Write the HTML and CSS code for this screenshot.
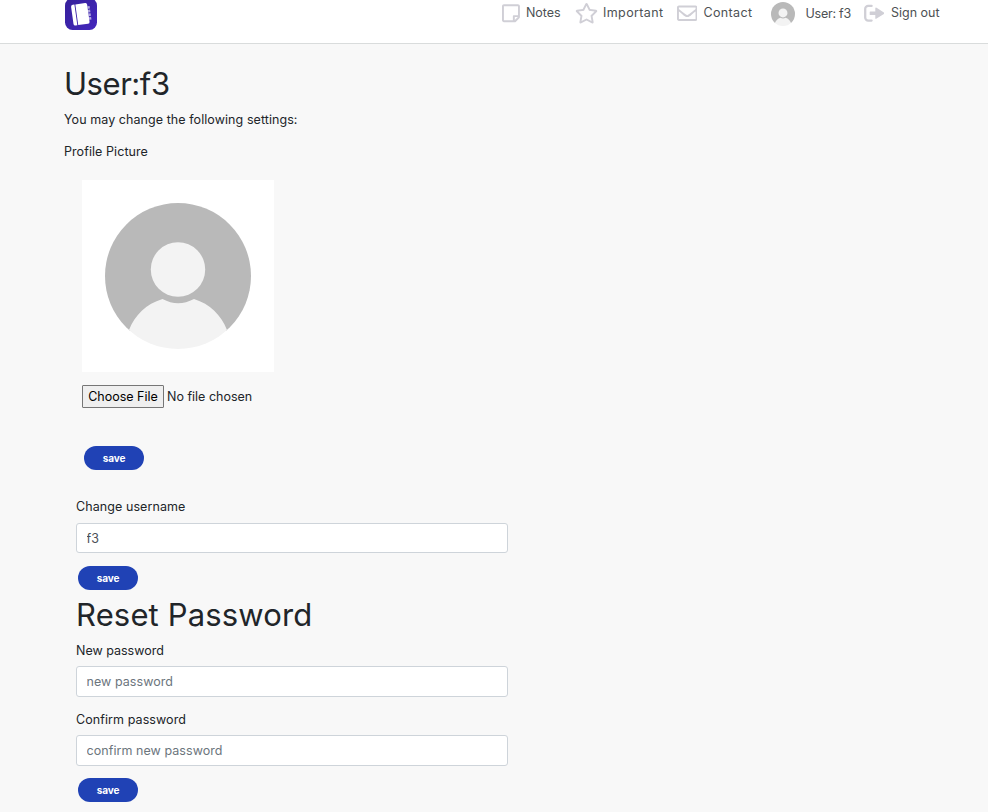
FILE: index.html
```html
<!DOCTYPE html>
<html lang="en">
<head>
<meta charset="utf-8">
<title>User settings</title>
<link rel="stylesheet" href="styles.css">
</head>
<body>
<svg width="0" height="0" class="defs" aria-hidden="true">
  <symbol id="avatar" viewBox="0 0 146 146">
    <clipPath id="disc"><circle cx="73" cy="73" r="73"/></clipPath>
    <g clip-path="url(#disc)">
      <rect width="146" height="128" fill="#b9b9b9"/>
      <path d="M24 127C30 112 41 101 57.500 96Q73 104.500 89 96C105 101 116 112 122 127L146 146H0Z" fill="#f3f3f3"/>
      <circle cx="73" cy="66.500" r="27.200" fill="#f3f3f3"/>
    </g>
  </symbol>
</svg>
<header class="topbar">
  <a class="brand"><svg width="32" height="32" viewBox="0 0 32 32">
    <defs><linearGradient id="lg" x1="0" y1="0" x2="1" y2="1"><stop offset="0" stop-color="#35209a"/><stop offset="1" stop-color="#4427bd"/></linearGradient></defs>
    <rect width="32" height="32" rx="7.500" fill="url(#lg)"/>
    <g transform="rotate(-8 16 16)" fill="#fff">
      <path d="M9 5.800h1.800v20.800H9a1.800 1.800 0 0 1-1.800-1.800V7.600A1.800 1.800 0 0 1 9 5.800z"/>
      <path d="M11.700 5.800h9.900a1.800 1.800 0 0 1 1.800 1.800v17.200a1.800 1.800 0 0 1-1.800 1.800h-9.900z"/>
      <path d="M23.400 9.200h2.200v2.600h-2.200zM23.400 12.900h2.200v2.600h-2.200zM23.400 16.600h2.200v2.600h-2.200zM23.400 20.300h2.200v2.600h-2.200z" opacity=".6"/>
    </g>
  </svg></a>
  <nav class="nav">
    <a class="item notes"><svg width="17.92" height="20.48" viewBox="0 0 448 512"><path d="M448 348.106V80c0-26.51-21.49-48-48-48H48C21.49 32 0 53.49 0 80v351.988c0 26.51 21.49 48 48 48h268.118a48 48 0 0 0 33.941-14.059l83.882-83.882A48 48 0 0 0 448 348.106zm-128 80.005v-76.118h76.118L320 428.111zM400 80v223.988H296c-13.255 0-24 10.745-24 24v104H48V80h352z"/></svg><span>Notes</span></a>
    <a class="item important"><svg width="23.04" height="20.48" viewBox="0 0 576 512"><path d="M528.1 171.5L382 150.2 316.7 17.8c-11.7-23.6-45.6-23.9-57.4 0L194 150.2 47.900 171.5c-26.2 3.8-36.7 36.1-17.7 54.6l105.7 103-25 145.500c-4.500 26.300 23.200 46 46.400 33.700L288 439.600l130.700 68.700c23.200 12.200 50.900-7.400 46.400-33.700l-25-145.500 105.700-103c19-18.500 8.500-50.800-17.700-54.600zM388.600 312.300l23.700 138.400L288 385.400l-124.300 65.300 23.700-138.400-100.600-98 139-20.200 62.200-126 62.200 126 139 20.200-100.600 98z"/></svg><span>Important</span></a>
    <a class="item contact"><svg width="20.48" height="20.48" viewBox="0 0 512 512"><path d="M464 64H48C21.490 64 0 85.490 0 112v288c0 26.510 21.490 48 48 48h416c26.510 0 48-21.490 48-48V112c0-26.510-21.490-48-48-48zm0 48v40.805c-22.422 18.259-58.168 46.651-134.587 106.490-16.841 13.247-50.201 45.072-73.413 44.701-23.208.375-56.579-31.459-73.413-44.701C106.180 199.465 70.425 171.067 48 152.805V112h416zM48 400V214.398c22.914 18.251 55.409 43.862 104.938 82.646 21.857 17.205 60.134 55.186 103.062 54.955 42.717.231 80.509-37.199 103.053-54.947 49.528-38.783 82.032-64.401 104.947-82.653V400H48z"/></svg><span>Contact</span></a>
    <a class="item user"><svg width="24" height="24"><use href="#avatar"/></svg><span>User: f3</span></a>
    <a class="item signout"><svg width="20.48" height="20.48" viewBox="0 0 20.48 20.48"><path class="door" d="M7.600 2.900H4.200a3 3 0 0 0-3 3v8.700a3 3 0 0 0 3 3h3.400"/><path d="M6.300 8.400h5V5.200q.3-1.200 1.300-.4l7.300 4.700q.7.700 0 1.400l-7.300 4.700q-1 .8-1.300-.4V12.100h-5q-.6 0-.6-.6V9q0-.6.6-.6z"/></svg><span>Sign out</span></a>
  </nav>
</header>
<main class="page">
  <h1 class="title">User:f3</h1>
  <p class="text intro">You may change the following settings:</p>
  <p class="text pic-label">Profile Picture</p>
  <section class="picture">
    <div class="photo"><svg width="146" height="146"><use href="#avatar"/></svg></div>
    <div class="file"><button class="choose" type="button">Choose File</button><span class="none">No file chosen</span></div>
    <button class="save" type="button">save</button>
  </section>
  <form class="form">
    <label class="text l-user" for="u">Change username</label>
    <input class="field" id="u" type="text" value="f3">
    <button class="save" type="button">save</button>
    <h1 class="title reset">Reset Password</h1>
    <label class="text l-new" for="n">New password</label>
    <input class="field" id="n" type="password" placeholder="new password">
    <label class="text l-confirm" for="c">Confirm password</label>
    <input class="field" id="c" type="password" placeholder="confirm new password">
    <button class="save" type="button">save</button>
  </form>
</main>
</body>
</html>
```
FILE: styles.css
```css
* { box-sizing: border-box; }
html { overflow: hidden; }
body {
  margin: 0;
  background: #f8f8f8;
  color: #212529;
  font: 12.5px/20px Inter, "Open Sans", sans-serif;
}
.defs { position: absolute; }
.topbar {
  display: flex;
  justify-content: space-between;
  height: 44px;
  padding: 0 48px 0 65px;
  background: #fff;
  border-bottom: 1px solid #d9dcdc;
}
.brand { display: block; height: 32px; margin-top: -2px; }
.nav { display: flex; height: 27px; align-items: center; color: #4d5154; }
.item { display: flex; align-items: center; flex: none; white-space: nowrap; }
.item svg { flex: none; fill: #d0cfd6; }
.item .door { fill: none; stroke: #d0cfd6; stroke-width: 2.3; stroke-linecap: round; }
.item span { margin-top: -1px; }
.notes { width: 72.5px; gap: 6px; }
.important { width: 102.5px; gap: 5.5px; letter-spacing: .38px; }
.contact { width: 94px; gap: 6px; letter-spacing: .36px; }
.user { width: 93px; gap: 10.5px; letter-spacing: -.25px; }
.user span { margin-top: 0; }
.signout { width: 76px; gap: 6.5px; }
.user svg { margin-top: 1px; }

.page { padding-left: 64px; }
.title { margin: 0; font-size: 31px; font-weight: 400; line-height: 38px; }
.page > .title { padding-top: 21px; letter-spacing: -.45px; }
.text { display: block; margin: 0; height: 20px; }
.intro { margin-top: 7px; letter-spacing: .07px; }
.pic-label { margin-top: 12px; letter-spacing: .07px; }
.picture { padding: 18px 0 0 18px; }
.photo {
  display: flex;
  align-items: center;
  justify-content: center;
  width: 192px;
  height: 192px;
  background: #fff;
}
.file { display: flex; align-items: center; gap: 3px; margin-top: 13px; height: 23px; }
.choose {
  width: 82px;
  height: 23px;
  padding: 0;
  border: 1px solid #767676;
  border-radius: 1px;
  background: #efefef;
  color: #000;
  font: inherit;
}
.save {
  display: block;
  width: 60px;
  height: 24px;
  margin: 0 0 0 2px;
  padding: 0;
  border: 0;
  border-radius: 12px;
  background: #2042b5;
  color: #fff;
  font: 700 10px/24px Inter, sans-serif;
  letter-spacing: -.1px;
}
.picture .save { margin-top: 38px; }
.form { padding: 27px 0 0 12px; }
.l-user, .l-confirm { letter-spacing: .08px; }
.field {
  display: block;
  width: 432px;
  height: 30px;
  margin: 6px 0 13px;
  padding: 0 9.5px;
  border: 1px solid #ced4da;
  border-radius: 3px;
  background: #fff;
  color: #495057;
  font: inherit;
  letter-spacing: .06px;
}
.field::placeholder { color: #6c757d; opacity: 1; }
.reset { margin-top: 6px; letter-spacing: .15px; }
.l-new { margin-top: 7px; }
#n, #c { height: 31px; margin-top: 5px; }
#c { margin-bottom: 12px; }
```
